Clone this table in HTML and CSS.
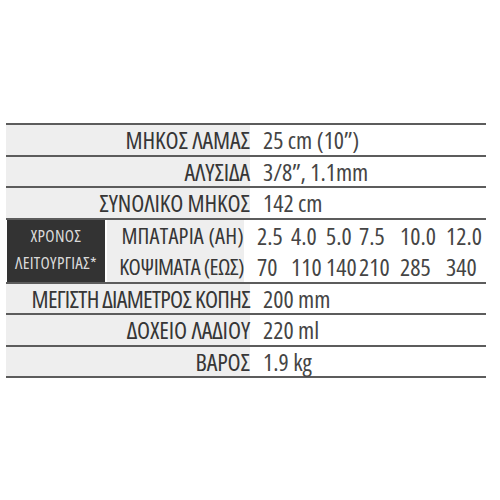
FILE: index.html
```html
<!DOCTYPE html>
<html lang="el">
<head>
<meta charset="utf-8">
<link rel="stylesheet" href="styles.css">
</head>
<body>
<div class="spec">
  <div class="row"><div class="label">ΜΗΚΟΣ ΛΑΜΑΣ</div><div class="value">25 cm (10”)</div></div>
  <div class="row"><div class="label">ΑΛΥΣΙΔΑ</div><div class="value">3/8”, 1.1mm</div></div>
  <div class="row"><div class="label">ΣΥΝΟΛΙΚΟ ΜΗΚΟΣ</div><div class="value">142 cm</div></div>
  <div class="group">
    <div class="dark">ΧΡΟΝΟΣ<br>ΛΕΙΤΟΥΡΓΙΑΣ*</div>
    <div class="sub">
      <div class="subrow"><div class="sublabel">ΜΠΑΤΑΡΙΑ (ΑΗ)</div>
        <div class="nums"><span>2.5</span><span>4.0</span><span>5.0</span><span>7.5</span><span>10.0</span><span>12.0</span></div></div>
      <div class="subrow"><div class="sublabel sublabel-tight">ΚΟΨΙΜΑΤΑ (ΕΩΣ)</div>
        <div class="nums"><span>70</span><span>110</span><span>140</span><span>210</span><span>285</span><span>340</span></div></div>
    </div>
  </div>
  <div class="row"><div class="label label-long">ΜΕΓΙΣΤΗ ΔΙΑΜΕΤΡΟΣ ΚΟΠΗΣ</div><div class="value">200 mm</div></div>
  <div class="row"><div class="label">ΔΟΧΕΙΟ ΛΑΔΙΟΥ</div><div class="value">220 ml</div></div>
  <div class="row"><div class="label">ΒΑΡΟΣ</div><div class="value">1.9 kg</div></div>
</div>
</body>
</html>
```
FILE: styles.css
```css
html, body {
  margin: 0;
  padding: 0;
  background: #ffffff;
}
body {
  font-family: "Open Sans", "DejaVu Sans Condensed", sans-serif;
  font-stretch: 75%;
  font-size: 24px;
  color: #3a3a3a;
}
.spec {
  margin: 123px 0 0 6px;
  width: 480px;
  border-top: 2px solid #5c5c5c;
}
.row {
  display: flex;
  height: 29.5px;
  border-bottom: 2px solid #5c5c5c;
  line-height: 29.5px;
}
.label {
  width: 244px;
  background: #eeeeee;
  text-align: right;
  color: #363636;
  white-space: nowrap;
  letter-spacing: -0.1px;
}
.label-long {
  letter-spacing: -0.7px;
}
.value {
  flex: 1;
  padding-left: 13px;
  color: #454545;
  white-space: nowrap;
}
.group {
  display: flex;
  height: 62px;
  border-bottom: 2px solid #5c5c5c;
}
.dark {
  width: 106px;
  margin-left: 1px;
  background: #333333;
  color: #dadada;
  font-size: 17px;
  letter-spacing: 0.3px;
  line-height: 27px;
  text-align: center;
  padding-top: 2px;
  box-sizing: border-box;
  border-right: 2px solid #ffffff;
}
.sub {
  flex: 1;
  display: flex;
  flex-direction: column;
}
.subrow {
  display: flex;
  height: 31px;
  line-height: 31px;
}
.sublabel {
  width: 137px;
  background: #eeeeee;
  text-align: right;
  color: #363636;
  white-space: nowrap;
  font-size: 22.5px;
  letter-spacing: 0.2px;
}
.sublabel-tight {
  letter-spacing: -0.6px;
}
.nums {
  flex: 1;
  padding-left: 13px;
  display: grid;
  grid-template-columns: 34px 35px 33px 41px 46px 40px;
  color: #454545;
  white-space: nowrap;
}
```
